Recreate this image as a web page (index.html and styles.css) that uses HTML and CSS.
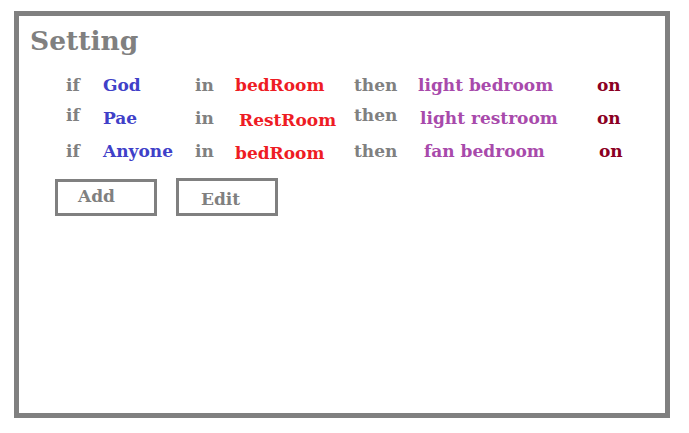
FILE: index.html
```html
<!DOCTYPE html>
<html>
<head>
<meta charset="utf-8">
<link rel="stylesheet" href="styles.css">
</head>
<body>
<div class="frame">
  <h1 class="title">Setting</h1>
  <div class="rules">
    <div class="rule">
      <span class="kw">if</span>
      <span class="who">God</span>
      <span class="kw">in</span>
      <span class="room">bedRoom</span>
      <span class="kw">then</span>
      <span class="dev">light bedroom</span>
      <span class="state">on</span>
    </div>
    <div class="rule">
      <span class="kw up">if</span>
      <span class="who">Pae</span>
      <span class="kw">in</span>
      <span class="room shift down">RestRoom</span>
      <span class="kw up">then</span>
      <span class="dev shift-s">light restroom</span>
      <span class="state">on</span>
    </div>
    <div class="rule">
      <span class="kw">if</span>
      <span class="who">Anyone</span>
      <span class="kw">in</span>
      <span class="room down">bedRoom</span>
      <span class="kw">then</span>
      <span class="dev shift-l">fan bedroom</span>
      <span class="state shift-s">on</span>
    </div>
  </div>
  <div class="actions">
    <button class="btn">Add</button>
    <button class="btn btn-edit">Edit</button>
  </div>
</div>
</body>
</html>
```

FILE: styles.css
```css
html, body {
  margin: 0;
  padding: 0;
  background: #ffffff;
}

body {
  font-family: "DejaVu Serif", "Liberation Serif", serif;
  font-weight: bold;
}

.frame {
  box-sizing: border-box;
  margin: 11px 0 0 14px;
  width: 656px;
  height: 407px;
  border: 5px solid #808080;
  padding: 0 0 0 11px;
}

.title {
  margin: 10px 0 0 0;
  font-size: 26.5px;
  line-height: 30px;
  color: #808080;
  font-weight: bold;
}

.rules {
  margin: 12px 0 0 36px;
  display: flex;
  flex-direction: column;
}

.rule {
  display: grid;
  grid-template-columns: 37px 92px 40px 119px 64px 179px auto;
  height: 33px;
  align-items: center;
  font-size: 17px;
  line-height: 20px;
}

.kw { color: #808080; }
.who { color: #4040c8; }
.room { color: #ee1c24; }
.dev { color: #a84aab; }
.state { color: #8b0023; }

.up { margin-top: -5px; }
.down { margin-top: 5px; }
.shift { margin-left: 4px; }
.shift-s { margin-left: 2px; }
.shift-l { margin-left: 6px; }

.actions {
  display: flex;
  gap: 19px;
  margin: 12px 0 0 25px;
  align-items: flex-start;
}

.btn {
  box-sizing: border-box;
  width: 102px;
  height: 37px;
  border: 3px solid #808080;
  background: #ffffff;
  font-family: "DejaVu Serif", "Liberation Serif", serif;
  font-weight: bold;
  font-size: 17px;
  color: #808080;
  text-align: left;
  padding: 0 0 4px 20px;
}

.btn-edit {
  margin-top: -1px;
  height: 38px;
  padding: 4px 0 0 22px;
}
```
